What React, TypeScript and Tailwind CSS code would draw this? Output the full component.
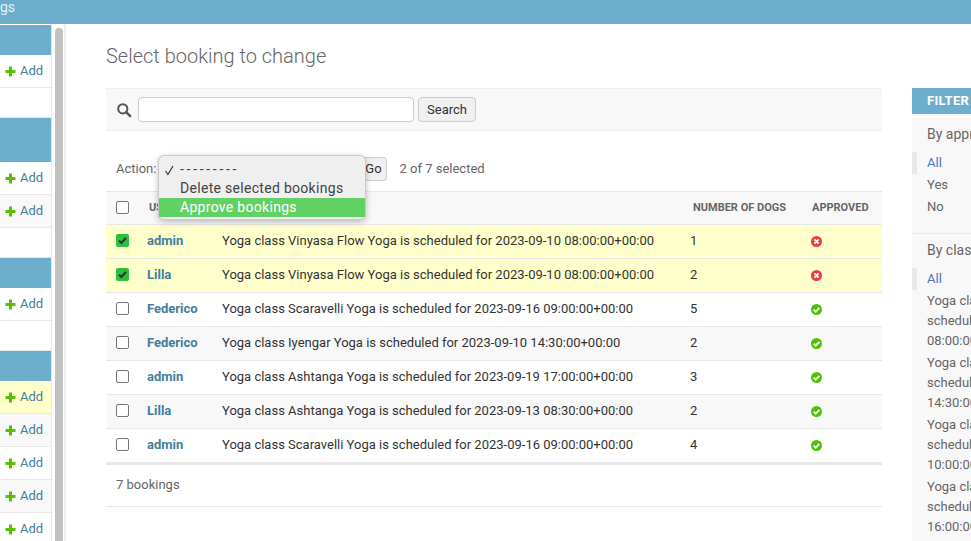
const Plus = () => (
  <svg width="13" height="13" viewBox="0 0 13 13" className="shrink-0">
    <path d="M5 1.5h3V5h3.5v3H8v3.5H5V8H1.5V5H5z" fill="#58bf08" />
  </svg>
);

const Yes = () => (
  <svg width="13" height="13" viewBox="0 0 13 13" className="block">
    <circle cx="6.5" cy="6.5" r="5.5" fill="#4fc00a" />
    <path d="M3.7 6.6l2 2 3.7-3.8" fill="none" stroke="#fff" strokeWidth="1.9" />
  </svg>
);

const No = () => (
  <svg width="13" height="13" viewBox="0 0 13 13" className="block">
    <circle cx="6.5" cy="6.5" r="5.5" fill="#ef3a3f" />
    <path d="M4.4 4.4l4.2 4.2M8.6 4.4l-4.2 4.2" fill="none" stroke="#fff" strokeWidth="1.9" />
  </svg>
);

const Box = ({ checked = false }: { checked?: boolean }) =>
  checked ? (
    <span className="flex h-[13px] w-[13px] items-center justify-center rounded-[2px] bg-[#2fbf3e]">
      <svg width="11" height="11" viewBox="0 0 11 11">
        <path d="M2 5.6l2.4 2.4L9 2.8" fill="none" stroke="#26352a" strokeWidth="2" />
      </svg>
    </span>
  ) : (
    <span className="block h-[13px] w-[13px] rounded-[2px] border border-[#767676] bg-white" />
  );

const SideHeader = ({ h }: { h: string }) => <div className={`${h} bg-[#6daecd]`} />;

const AddRow = ({ bg = "bg-white" }: { bg?: string }) => (
  <div className={`flex h-[33px] items-center gap-[3px] border-b border-[#e8e8e8] pl-[4px] text-[13px] text-[#447e9b] ${bg}`}>
    <Plus />
    <span>Add</span>
  </div>
);

const bookings = [
  { user: "admin", text: "Yoga class Vinyasa Flow Yoga is scheduled for 2023-09-10 08:00:00+00:00", dogs: 1, ok: false, sel: true },
  { user: "Lilla", text: "Yoga class Vinyasa Flow Yoga is scheduled for 2023-09-10 08:00:00+00:00", dogs: 2, ok: false, sel: true },
  { user: "Federico", text: "Yoga class Scaravelli Yoga is scheduled for 2023-09-16 09:00:00+00:00", dogs: 5, ok: true, sel: false },
  { user: "Federico", text: "Yoga class Iyengar Yoga is scheduled for 2023-09-10 14:30:00+00:00", dogs: 2, ok: true, sel: false },
  { user: "admin", text: "Yoga class Ashtanga Yoga is scheduled for 2023-09-19 17:00:00+00:00", dogs: 3, ok: true, sel: false },
  { user: "Lilla", text: "Yoga class Ashtanga Yoga is scheduled for 2023-09-13 08:30:00+00:00", dogs: 2, ok: true, sel: false },
  { user: "admin", text: "Yoga class Scaravelli Yoga is scheduled for 2023-09-16 09:00:00+00:00", dogs: 4, ok: true, sel: false },
];

const FilterAll = () => (
  <div className="flex h-[22px] items-center border-l-[5px] border-[#e8e8e8] pl-[10px] text-[13px] text-[#447bbd]">All</div>
);

const FilterItem = ({ label }: { label: string }) => (
  <div className="flex h-[22px] items-center pl-[15px] text-[13px] text-[#666]">{label}</div>
);

const classTimes = ["08:00:00", "14:30:00", "10:00:00", "16:00:00"];

export default function App() {
  return (
    <div className="flex h-[541px] w-[971px] flex-col overflow-hidden bg-white font-['Roboto',sans-serif] text-[#333]">
      <div className="flex h-6 shrink-0 bg-[#6daecd]">
        <div className="flex w-[15px] justify-end overflow-hidden text-sm leading-[14px] text-[#e4f0f5]">gs</div>
      </div>

      <div className="flex min-h-0 flex-1">
        <div className="flex w-[66px] shrink-0 border-r-[2px] border-[#eeeeee] bg-white">
          <div className="w-[52px] shrink-0 border-r border-[#e8e8e8] pt-px">
            <SideHeader h="h-[30px]" />
            <AddRow />
            <div className="h-[30px] border-b border-[#e8e8e8]" />
            <SideHeader h="h-[44px]" />
            <AddRow />
            <AddRow bg="bg-[#f8f8f8]" />
            <div className="h-[30px] border-b border-[#e8e8e8]" />
            <SideHeader h="h-[30px]" />
            <AddRow />
            <div className="h-[30px] border-b border-[#e8e8e8]" />
            <SideHeader h="h-[30px]" />
            <AddRow bg="bg-[#ffffcc]" />
            <AddRow bg="bg-[#f8f8f8]" />
            <AddRow />
            <AddRow bg="bg-[#f8f8f8]" />
            <AddRow />
          </div>
          <div className="flex-1 pl-[3px] pt-[4px]">
            <div className="h-full w-[8px] rounded-t bg-[#c1c1c1]" />
          </div>
        </div>

        <div className="flex min-w-0 flex-1 pl-10 pt-5">
          <div className="w-[776px] shrink-0">
            <h1 className="text-xl leading-6 font-light text-[#666]">Select booking to change</h1>

            <div className="mt-[20px] flex h-[43px] items-center border-y border-[#eeeeee] bg-[#f8f8f8] pl-[10px]">
              <svg width="16" height="16" viewBox="0 0 16 16" className="shrink-0">
                <circle cx="6.8" cy="6.8" r="4.6" fill="none" stroke="#555" strokeWidth="2" />
                <path d="M10.2 10.2l4 4" stroke="#555" strokeWidth="2.4" strokeLinecap="round" />
              </svg>
              <div className="ml-[6px] h-[25px] w-[276px] rounded border border-[#cccccc] bg-white" />
              <div className="ml-[4px] flex h-[25px] w-[58px] items-center justify-center rounded border border-[#cccccc] bg-[#f0f0f0] text-[13px] text-[#333]">Search</div>
            </div>

            <div className="relative mt-[17px]">
              <div className="flex h-[43px] items-center pb-px pl-[10px] text-[13px] text-[#666]">
                <span>Action:</span>
                <div className="ml-[204px] flex h-[24px] w-[27px] items-center justify-center rounded-r border border-l-0 border-[#cccccc] bg-[#f0f0f0] text-[#333]">Go</div>
                <span className="ml-[7px] pl-[5px]">2 of 7 selected</span>
              </div>

              <div className="absolute left-[52px] top-[7px] z-10 h-[65px] w-[208px] rounded-[6px] border border-[#c9c9c9] bg-[#efefef] pt-[4px] text-sm leading-[19px] tracking-[0.3px] text-[#444] shadow-[0_2px_6px_rgba(0,0,0,0.25)]">
                <div className="relative flex h-[19px] items-center pl-[21px]">
                  <svg width="11" height="11" viewBox="0 0 11 11" className="absolute left-[5px] top-[5px]">
                    <path d="M1.5 6l2.4 3.5L9 1" fill="none" stroke="#333" strokeWidth="1.2" />
                  </svg>
                  <span className="tracking-[2.7px]">---------</span>
                </div>
                <div className="flex h-[19px] items-center pl-[21px]">Delete selected bookings</div>
                <div className="flex h-[19px] items-center bg-[#62d163] pl-[21px] text-white">Approve bookings</div>
              </div>

              <table className="w-full table-fixed border-collapse text-[13px]">
                <colgroup>
                  <col className="w-[41px]" />
                  <col className="w-[75px]" />
                  <col />
                  <col className="w-[121px]" />
                  <col className="w-[71px]" />
                </colgroup>
                <thead>
                  <tr className="h-[33px] border-y border-[#e8e8e8] bg-[#f8f8f8] text-left text-[11px] font-bold text-[#666]">
                    <th className="pb-[2px] pl-[10px] font-bold"><Box /></th>
                    <th className="pl-[2px] pt-px font-bold">USER</th>
                    <th className="font-bold" />
                    <th className="pl-[3px] pt-px font-bold">NUMBER OF DOGS</th>
                    <th className="pl-px pt-px font-bold">APPROVED</th>
                  </tr>
                </thead>
                <tbody>
                  {bookings.map((b, i) => (
                    <tr
                      key={i}
                      className={`h-[34px] border-b border-[#e8e8e8] ${b.sel ? "bg-[#ffffcc]" : i % 2 === 1 ? "bg-[#f8f8f8]" : "bg-white"}`}
                    >
                      <td className="pb-[2px] pl-[10px]"><Box checked={b.sel} /></td>
                      <td className="pb-[2px] font-bold text-[#447e9b]">{b.user}</td>
                      <td className="pb-[2px] text-[#333]">{b.text}</td>
                      <td className="pb-[2px] text-[#333]">{b.dogs}</td>
                      <td>
                        <div className="-ml-px">{b.ok ? <Yes /> : <No />}</div>
                      </td>
                    </tr>
                  ))}
                </tbody>
              </table>
              <div className="flex h-[44px] items-center border-y-[1px] border-t-[2px] border-[#e8e8e8] border-b-[#e8e8e8] pb-[2px] pl-[10px] text-[13px] text-[#666]">7 bookings</div>
            </div>
          </div>

          <div className="ml-[30px] mt-[44px] w-[240px] shrink-0 self-start bg-[#f8f8f8] pb-[30px]">
            <div className="flex h-[26px] items-center bg-[#6daecd] pl-[15px] text-[13px] font-bold tracking-wide text-white">FILTER</div>
            <div className="border-b border-[#e8e8e8] pb-[15px] pt-[5px]">
              <div className="flex h-[30px] items-center pl-[15px] text-sm text-[#666]">By approved</div>
              <div className="mt-[3px]">
                <FilterAll />
                <FilterItem label="Yes" />
                <FilterItem label="No" />
              </div>
            </div>
            <div className="pt-px">
              <div className="flex h-[30px] items-center pl-[15px] text-sm text-[#666]">By class</div>
              <div className="mt-[3px]">
                <FilterAll />
                <div className="pt-px">
                  {classTimes.map((t) => (
                    <div key={t} className="pb-[2px] pl-[15px] text-[13px] leading-[20px] text-[#666]">
                      <div>Yoga class Yoga</div>
                      <div>scheduled for</div>
                      <div>{t}+00:00</div>
                    </div>
                  ))}
                </div>
              </div>
            </div>
          </div>
        </div>
      </div>
    </div>
  );
}
